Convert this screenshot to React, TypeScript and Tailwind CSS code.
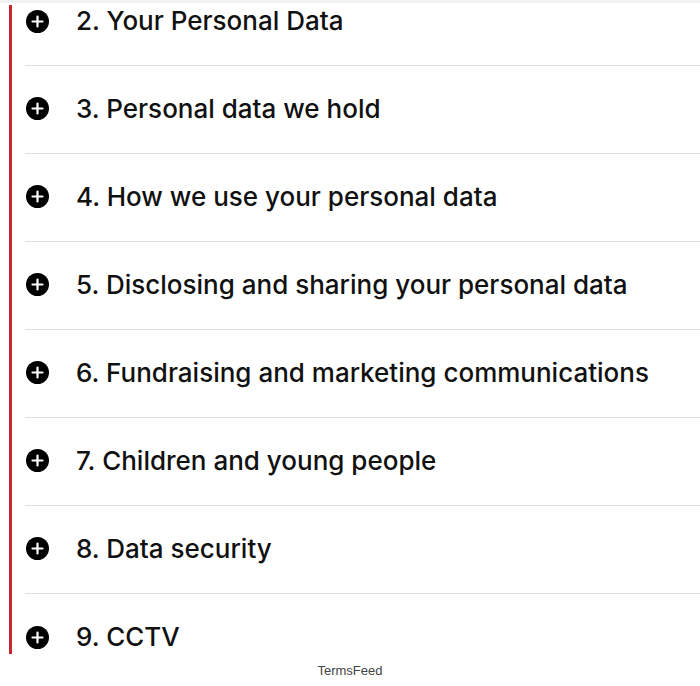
import React from "react";

const items = [
  "2. Your Personal Data",
  "3. Personal data we hold",
  "4. How we use your personal data",
  "5. Disclosing and sharing your personal data",
  "6. Fundraising and marketing communications",
  "7. Children and young people",
  "8. Data security",
  "9. CCTV",
];

function PlusCircle() {
  return (
    <svg width="23" height="23" viewBox="0 0 23 23" className="shrink-0">
      <circle cx="11.5" cy="11.5" r="11.5" fill="#000" />
      <path d="M11.5 6.5v10M6.5 11.5h10" stroke="#fff" strokeWidth="2.2" strokeLinecap="round" />
    </svg>
  );
}

export default function App() {
  return (
    <div
      className="w-[700px] h-[686px] bg-white overflow-hidden border-t-[3px] border-[#f3f3f3]"
      style={{ fontFamily: '"Liberation Sans", Arial, sans-serif' }}
    >
      <div className="h-[653px] bg-white overflow-hidden py-[2px]">
        <div className="ml-[9px] h-[649px] border-l-[3px] border-[#c8262c] pl-[13px] overflow-hidden">
          {items.map((t, i) => (
            <div
              key={t}
              className={
                i === 0
                  ? "flex items-center h-[61px] pb-[28px] border-b border-[#dedede]"
                  : i === items.length - 1
                  ? "flex items-center h-[88px] pb-[2px]"
                  : "flex items-center h-[88px] pb-[2px] border-b border-[#dedede]"
              }
            >
              <div className="pl-[1px] w-[51px]">
                <PlusCircle />
              </div>
              <span
                className="text-[26px] leading-none text-[#111] whitespace-nowrap font-medium"
                style={{ fontFamily: 'Inter, "Liberation Sans", sans-serif' }}
              >
                {t}
              </span>
            </div>
          ))}
        </div>
      </div>
      <div className="h-[30px] flex items-center justify-center text-[13px] text-[#444]">
        TermsFeed
      </div>
    </div>
  );
}
